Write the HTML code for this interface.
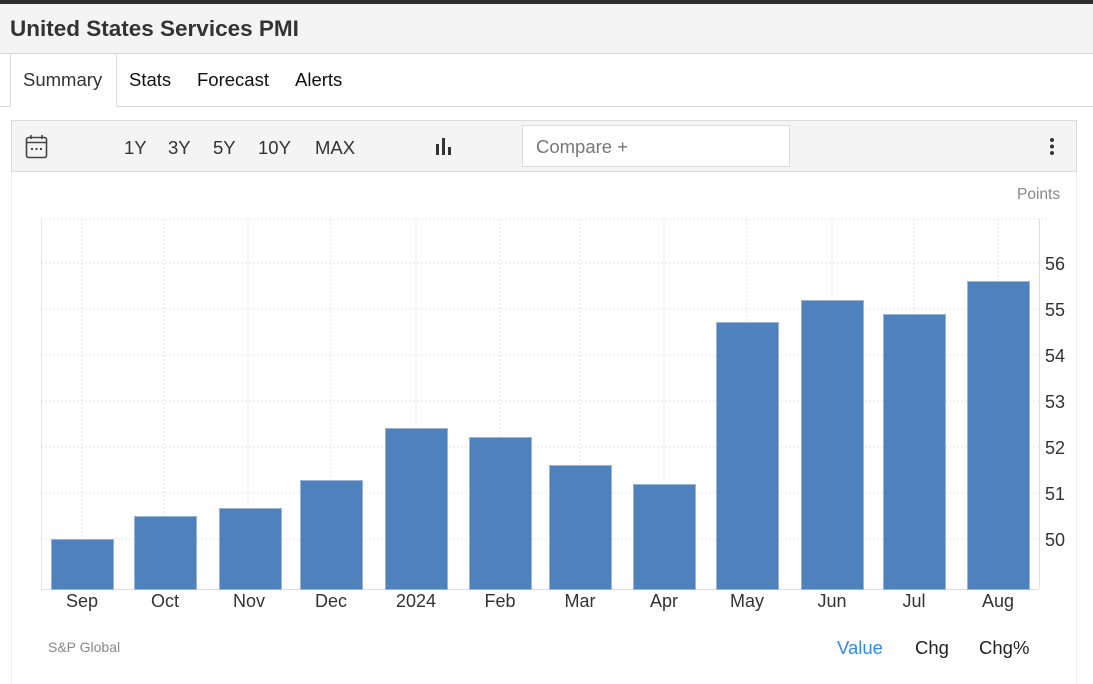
<!DOCTYPE html>
<html><head><style>
body{margin:0;width:1093px;height:684px;background:#fff;font-family:"Liberation Sans",sans-serif;position:relative;overflow:hidden}
.a{position:absolute}
</style></head><body>
<div class="a" style="left:0;top:0;width:1093px;height:4px;background:#2d2d2d"></div>
<div class="a" style="left:0;top:4px;width:1093px;height:49px;background:#f4f4f4;border-bottom:1px solid #d8d8d8"></div>
<div class="a" style="left:10px;top:16px;font-size:22.5px;font-weight:bold;color:#333">United States Services PMI</div>
<div class="a" style="left:0;top:106px;width:1093px;height:1px;background:#d8d8d8"></div>
<div class="a" style="left:10px;top:54px;width:105px;height:53px;background:#fff;border-left:1px solid #ddd;border-right:1px solid #ddd"></div>
<div class="a" style="left:23px;top:69px;font-size:18.5px;color:#333">Summary</div>
<div class="a" style="left:129px;top:69px;font-size:18.5px;color:#111">Stats</div>
<div class="a" style="left:197px;top:69px;font-size:18.5px;color:#111">Forecast</div>
<div class="a" style="left:295px;top:69px;font-size:18.5px;color:#111">Alerts</div>
<div class="a" style="left:11px;top:120px;width:1064px;height:50px;background:#f4f4f4;border:1px solid #ddd"></div>
<div class="a" style="left:11px;top:172px;width:1px;height:512px;background:#eee"></div>
<div class="a" style="left:1076px;top:172px;width:1px;height:512px;background:#eee"></div>
<svg class="a" style="left:25px;top:134px" width="24" height="26"><rect x="1.5" y="3.5" width="20" height="20" rx="2" fill="none" stroke="#444" stroke-width="1.6"/><line x1="1.5" y1="8.5" x2="21.5" y2="8.5" stroke="#444" stroke-width="1.6"/><line x1="6" y1="1" x2="6" y2="5" stroke="#444" stroke-width="1.6"/><line x1="17" y1="1" x2="17" y2="5" stroke="#444" stroke-width="1.6"/><rect x="6" y="14" width="2" height="2" fill="#444"/><rect x="10.5" y="14" width="2" height="2" fill="#444"/><rect x="15" y="14" width="2" height="2" fill="#444"/></svg>
<div class="a" style="left:124px;top:137px;font-size:18.5px;color:#333">1Y</div>
<div class="a" style="left:168px;top:137px;font-size:18.5px;color:#333">3Y</div>
<div class="a" style="left:213px;top:137px;font-size:18.5px;color:#333">5Y</div>
<div class="a" style="left:258px;top:137px;font-size:18.5px;color:#333">10Y</div>
<div class="a" style="left:315px;top:137px;font-size:18.5px;color:#333">MAX</div>
<svg class="a" style="left:434px;top:136px" width="20" height="20"><rect x="2" y="8" width="3" height="11" fill="#333"/><rect x="8" y="2" width="3" height="17" fill="#333"/><rect x="14" y="11" width="3" height="8" fill="#333"/></svg>
<div class="a" style="left:522px;top:125px;width:266px;height:40px;background:#fff;border:1px solid #ddd"></div>
<div class="a" style="left:536px;top:136px;font-size:18.5px;color:#777">Compare +</div>
<svg class="a" style="left:1048px;top:137px" width="8" height="20"><circle cx="4" cy="3" r="2" fill="#333"/><circle cx="4" cy="9.5" r="2" fill="#333"/><circle cx="4" cy="16" r="2" fill="#333"/></svg>
<div class="a" style="left:1017px;top:186px;font-size:15.5px;color:#888">Points</div>
<svg class="a" style="left:0;top:0" width="1093" height="684">
<g stroke="#e6e6e6" stroke-dasharray="2,2" stroke-width="1">
<line x1="41" y1="219" x2="1050" y2="219"/>
<line x1="41" y1="263" x2="1039" y2="263"/><line x1="41" y1="309" x2="1039" y2="309"/><line x1="41" y1="355" x2="1039" y2="355"/><line x1="41" y1="401" x2="1039" y2="401"/><line x1="41" y1="447" x2="1039" y2="447"/><line x1="41" y1="493" x2="1039" y2="493"/><line x1="41" y1="539" x2="1039" y2="539"/>
<line x1="82" y1="219" x2="82" y2="589"/><line x1="164" y1="219" x2="164" y2="589"/><line x1="248" y1="219" x2="248" y2="589"/><line x1="331" y1="219" x2="331" y2="589"/><line x1="416" y1="219" x2="416" y2="589"/><line x1="500" y1="219" x2="500" y2="589"/><line x1="580" y1="219" x2="580" y2="589"/><line x1="664" y1="219" x2="664" y2="589"/><line x1="747" y1="219" x2="747" y2="589"/><line x1="832" y1="219" x2="832" y2="589"/><line x1="914" y1="219" x2="914" y2="589"/><line x1="998" y1="219" x2="998" y2="589"/>
</g>
<line x1="41.5" y1="219" x2="41.5" y2="589" stroke="#e6e6e6"/>
<line x1="1039.5" y1="219" x2="1039.5" y2="589" stroke="#e0e0e0"/>
<line x1="41" y1="589.5" x2="1039" y2="589.5" stroke="#e0e0e0"/>
<g fill="#4f81bd" stroke="#9bb5da" stroke-width="1">
<rect x="51.5" y="539.5" width="62" height="50"/>
<rect x="134.5" y="516.5" width="62" height="73"/>
<rect x="219.5" y="508.5" width="62" height="81"/>
<rect x="300.5" y="480.5" width="62" height="109"/>
<rect x="385.5" y="428.5" width="62" height="161"/>
<rect x="469.5" y="437.5" width="62" height="152"/>
<rect x="549.5" y="465.5" width="62" height="124"/>
<rect x="633.5" y="484.5" width="62" height="105"/>
<rect x="716.5" y="322.5" width="62" height="267"/>
<rect x="801.5" y="300.5" width="62" height="289"/>
<rect x="883.5" y="314.5" width="62" height="275"/>
<rect x="967.5" y="281.5" width="62" height="308"/>
</g>
<g font-family="Liberation Sans,sans-serif" font-size="18" fill="#333">
<text x="1045" y="270">56</text><text x="1045" y="316">55</text><text x="1045" y="362">54</text><text x="1045" y="408">53</text><text x="1045" y="454">52</text><text x="1045" y="500">51</text><text x="1045" y="546">50</text>
</g>
<g font-family="Liberation Sans,sans-serif" font-size="18" fill="#333" text-anchor="middle">
<text x="82" y="607">Sep</text><text x="165" y="607">Oct</text><text x="249" y="607">Nov</text><text x="331" y="607">Dec</text><text x="416" y="607">2024</text><text x="500" y="607">Feb</text><text x="580" y="607">Mar</text><text x="664" y="607">Apr</text><text x="747" y="607">May</text><text x="832" y="607">Jun</text><text x="914" y="607">Jul</text><text x="998" y="607">Aug</text>
</g>
</svg>
<div class="a" style="left:48px;top:639px;font-size:14px;color:#888">S&amp;P Global</div>
<div class="a" style="left:837px;top:637px;font-size:18.5px;color:#2f8ceb">Value</div>
<div class="a" style="left:915px;top:637px;font-size:18.5px;color:#222">Chg</div>
<div class="a" style="left:979px;top:637px;font-size:18.5px;color:#222">Chg%</div>
</body></html>
